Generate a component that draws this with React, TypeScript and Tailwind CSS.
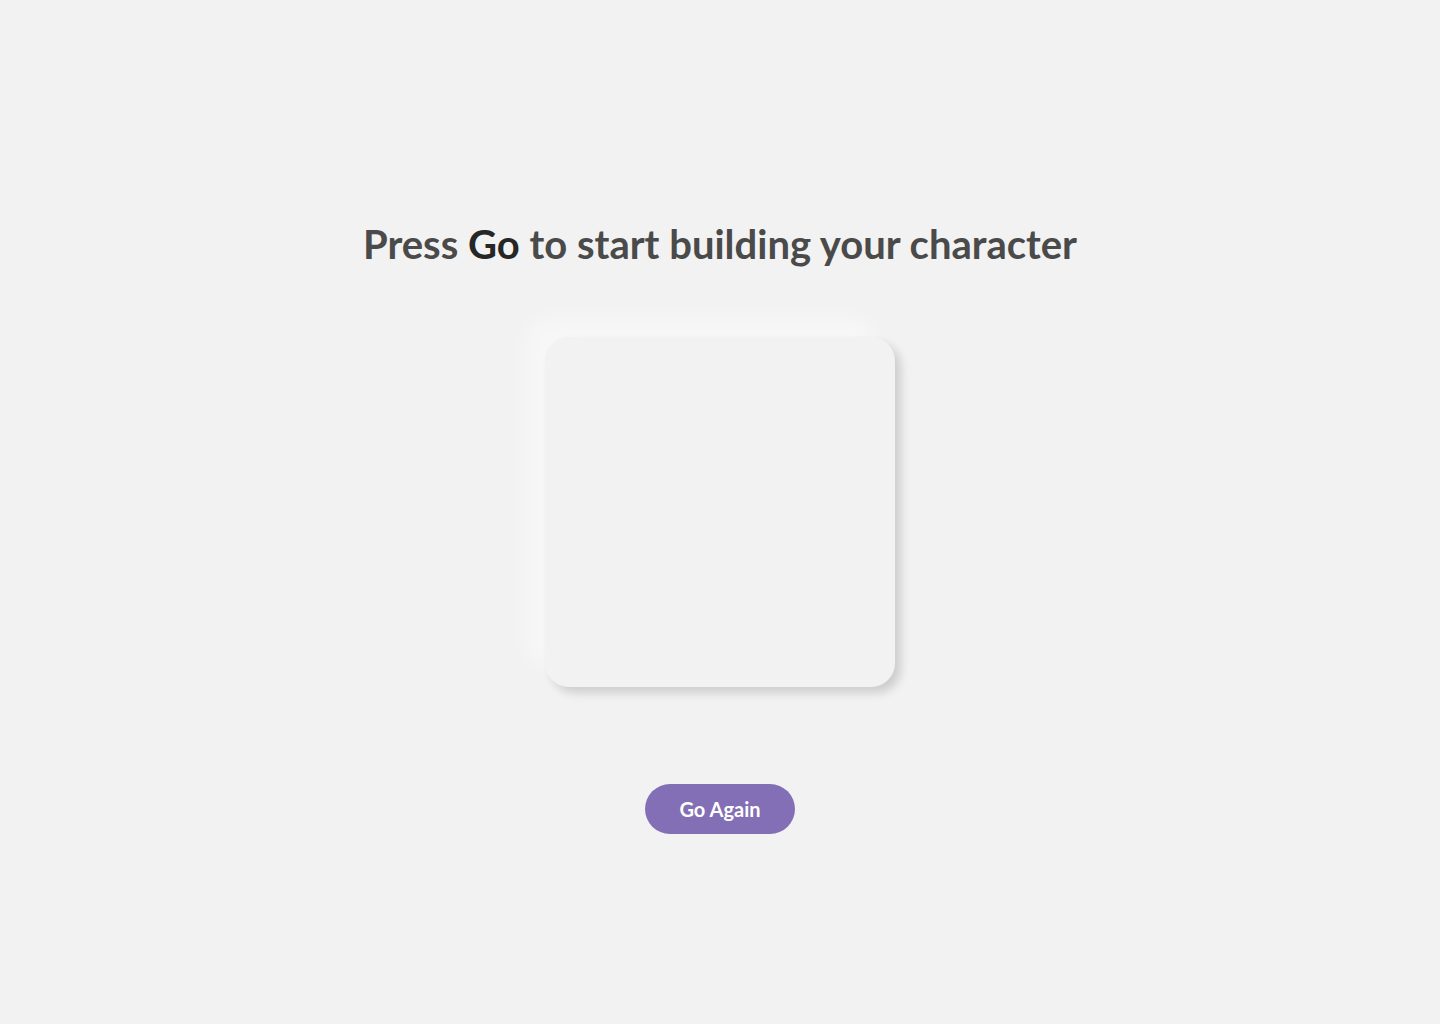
export default function App() {
  return (
    <div
      className="min-h-[1024px] w-full bg-[#f2f2f2] flex flex-col items-center"
      style={{ fontFamily: "Lato, 'Open Sans', sans-serif" }}
    >
      <h1 className="mt-[217px] text-[40px] leading-[54px] font-bold text-[#4a4a4a]">
        Press <span className="text-[#262626]">Go</span> to start building your character
      </h1>
      <div className="mt-[66px] w-[350px] h-[350px] rounded-[24px] bg-[#f2f2f2] shadow-[6px_6px_10px_rgba(0,0,0,0.15),-20px_-20px_20px_rgba(255,255,255,0.4)]" />
      <button className="mt-[97px] w-[150px] h-[50px] rounded-full bg-[#836fb5] text-white text-[20px] font-bold">
        Go Again
      </button>
    </div>
  );
}
